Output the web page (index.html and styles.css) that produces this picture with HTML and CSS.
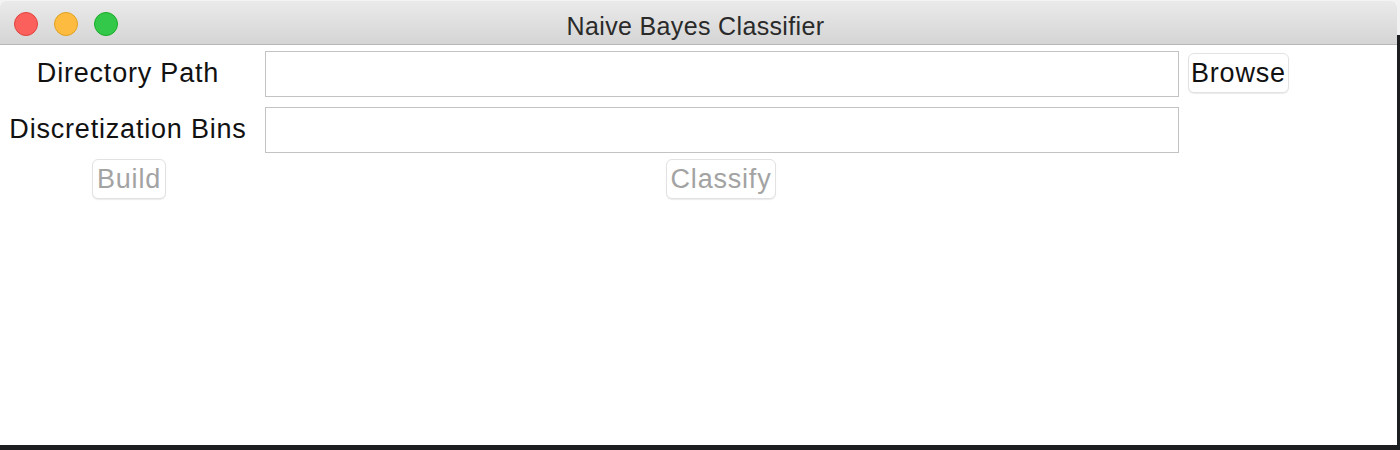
FILE: index.html
```html
<!DOCTYPE html>
<html>
<head>
<meta charset="utf-8">
<link rel="stylesheet" href="styles.css">
</head>
<body>
<div class="window">
  <div class="titlebar">
    <div class="lights">
      <span class="light red"></span>
      <span class="light yellow"></span>
      <span class="light green"></span>
    </div>
    <div class="title">Naive Bayes Classifier</div>
  </div>
  <div class="content">
    <div class="label">Directory Path</div>
    <div class="entry"></div>
    <div class="cell-btn"><button class="btn browse">Browse</button></div>
    <div class="label">Discretization Bins</div>
    <div class="entry"></div>
    <div></div>
    <div class="cell-center build-cell"><button class="btn disabled">Build</button></div>
    <div class="cell-center classify-cell"><button class="btn disabled">Classify</button></div>
    <div></div>
  </div>
</div>
</body>
</html>
```
FILE: styles.css
```css
html, body {
  margin: 0;
  padding: 0;
}
body {
  width: 1400px;
  height: 450px;
  overflow: hidden;
  background: linear-gradient(to bottom, #f2f2f2 0, #f2f2f2 35px, #1d1e1f 35px);
  font-family: "Liberation Sans", Arial, sans-serif;
}
.window {
  width: 1397px;
  height: 445px;
  background: #ffffff;
  border-radius: 6px 6px 0 0;
  overflow: hidden;
}
.titlebar {
  height: 44px;
  border-bottom: 1px solid #b8b8b8;
  background: linear-gradient(to bottom, #ebebeb, #d5d5d5);
  box-shadow: inset 0 1px 0 #f4f4f4;
  display: flex;
  align-items: center;
  justify-content: center;
  position: relative;
  border-radius: 6px 6px 0 0;
}
.lights {
  position: absolute;
  left: 14px;
  top: 12px;
  display: flex;
  gap: 16px;
}
.light {
  width: 22px;
  height: 22px;
  border-radius: 50%;
  display: block;
}
.red { background: #fc605c; border: 1px solid #e0443e; }
.yellow { background: #fdbc40; border: 1px solid #dea123; }
.green { background: #34c84a; border: 1px solid #1aab29; }
.title {
  font-size: 25px;
  letter-spacing: 0.35px;
  color: #2a2a2a;
  margin-left: -6px;
  margin-top: 8px;
}
.content {
  display: grid;
  grid-template-columns: 256px 914px auto;
  column-gap: 9px;
  grid-template-rows: 46px 46px 40px;
  row-gap: 10px;
  padding-top: 6px;
  font-size: 27px;
  letter-spacing: 0.8px;
}
.content > :nth-child(n+7) {
  margin-top: -4px;
}
.label {
  display: flex;
  align-items: center;
  justify-content: center;
  color: #111;
  padding-bottom: 2px;
}
.entry {
  border: 1px solid #c3c3c3;
  background: #fff;
}
.cell-btn {
  display: flex;
  align-items: center;
}
.cell-center {
  display: flex;
  justify-content: center;
  align-items: flex-start;
}
.build-cell {
  padding-left: 2px;
}
.classify-cell {
  padding-right: 2px;
}
.btn {
  font-family: "Liberation Sans", Arial, sans-serif;
  font-size: 27px;
  letter-spacing: 0.8px;
  height: 40px;
  padding: 0 4px;
  background: #fff;
  color: #111;
  border: 1px solid #e2e2e2;
  border-radius: 6px;
  box-shadow: 0 1px 1px rgba(0,0,0,0.08);
  line-height: 1;
}
.btn.browse {
  padding: 0 2px;
  margin-top: -2px;
}
.btn.disabled {
  color: #a3a3a3;
}
```
